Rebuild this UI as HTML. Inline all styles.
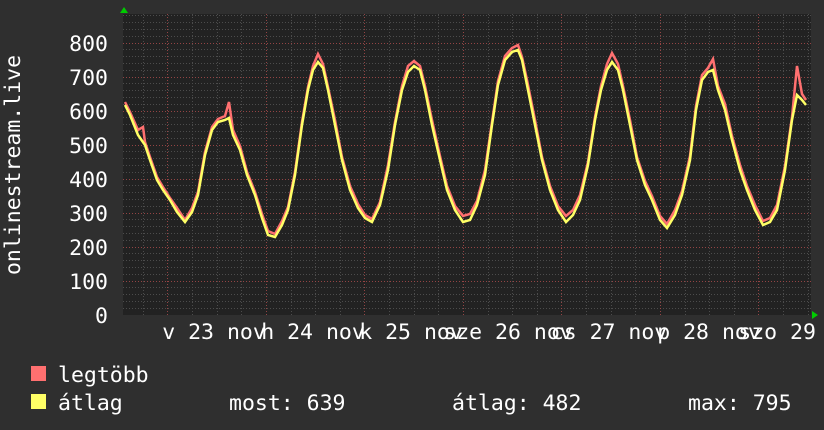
<!DOCTYPE html>
<html><head><meta charset="utf-8"><style>
html,body{margin:0;padding:0;background:#2f2f2f;}
svg{display:block}
text{font-family:"DejaVu Sans Mono","Liberation Mono",monospace;font-size:21.5px;fill:#fff}
</style></head><body>
<svg width="824" height="430" viewBox="0 0 824 430" xmlns="http://www.w3.org/2000/svg">
<rect width="824" height="430" fill="#2f2f2f"/>
<rect x="123" y="14" width="688" height="301" fill="#222"/>
<g stroke="#777" stroke-width="1" stroke-dasharray="1,2" opacity="0.5">
<path d="M123 308.5H811M123 301.5H811M123 294.5H811M123 287.5H811M123 274.5H811M123 267.5H811M123 260.5H811M123 253.5H811M123 240.5H811M123 233.5H811M123 226.5H811M123 219.5H811M123 206.5H811M123 199.5H811M123 192.5H811M123 185.5H811M123 172.5H811M123 165.5H811M123 158.5H811M123 151.5H811M123 138.5H811M123 131.5H811M123 124.5H811M123 117.5H811M123 104.5H811M123 97.5H811M123 90.5H811M123 83.5H811M123 70.5H811M123 63.5H811M123 56.5H811M123 49.5H811M123 36.5H811M123 29.5H811M123 22.5H811M123 15.5H811"/>
<path d="M143.5 14V315M192.5 14V315M217.5 14V315M241.5 14V315M291.5 14V315M315.5 14V315M340.5 14V315M389.5 14V315M414.5 14V315M438.5 14V315M488.5 14V315M512.5 14V315M537.5 14V315M586.5 14V315M611.5 14V315M635.5 14V315M685.5 14V315M709.5 14V315M734.5 14V315M783.5 14V315M808.5 14V315"/>
</g>
<g stroke="#a04848" stroke-width="1" stroke-dasharray="1,2" opacity="0.9">
<path d="M123 281.5H811M123 247.5H811M123 213.5H811M123 179.5H811M123 145.5H811M123 111.5H811M123 77.5H811M123 43.5H811"/>
<path d="M167.5 14V315M266.5 14V315M364.5 14V315M463.5 14V315M561.5 14V315M660.5 14V315M758.5 14V315"/>
</g>
<polygon points="120,13 128,13 124,7" fill="#0c0"/>
<polygon points="812,311 812,319 818,315" fill="#0c0"/>
<polyline transform="translate(0,2)" fill="none" stroke="#ff7070" stroke-width="2.5" points="125,100 130,110 138,128 143,125 145,140 150,155 157,175 163,185 170,196 177,206 185,218 192,206 198,190 205,150 212,125 218,117 225,114 229,100 233,128 240,144 247,170 255,190 262,212 268,229 275,232 282,219 288,205 295,170 302,120 308,85 313,64 318,52 323,62 328,85 335,118 342,155 350,184 358,202 365,213 372,217 380,200 388,163 395,120 402,84 408,64 414,59 420,64 425,84 432,118 440,154 447,184 455,204 463,214 470,212 477,199 485,168 492,120 498,79 505,54 512,46 518,43 522,55 527,78 535,118 542,155 550,184 558,204 566,214 573,208 580,193 588,160 595,115 601,84 607,62 612,51 618,62 623,84 630,118 637,155 645,179 652,194 660,214 667,222 675,208 682,189 690,154 696,104 702,73 708,66 713,57 718,84 725,102 732,134 740,163 747,184 755,203 763,219 770,216 777,203 785,164 792,115 797,64 802,92 806,98"/>
<polyline fill="none" stroke="#ffff66" stroke-width="2.5" points="125,105 130,115 138,135 145,145 150,160 157,180 163,190 170,200 177,212 185,222 192,212 198,195 205,155 212,130 218,122 225,120 229,118 233,135 240,150 247,175 255,195 262,218 268,235 275,237 282,225 288,210 295,175 302,125 308,90 313,70 318,62 323,68 328,90 335,125 342,160 350,190 358,208 365,218 372,222 380,205 388,170 395,125 402,90 408,72 414,66 420,70 425,90 432,125 440,160 447,190 455,210 463,222 470,220 477,205 485,175 492,125 498,85 505,60 512,52 518,50 522,60 527,85 535,125 542,160 550,190 558,210 566,222 573,215 580,200 588,165 595,120 601,90 607,70 612,62 618,70 623,90 630,125 637,160 645,185 652,200 660,220 667,228 675,215 682,195 690,160 696,110 702,80 708,72 713,70 718,90 725,110 732,140 740,170 747,190 755,210 763,225 770,222 777,210 785,170 792,120 797,95 802,100 806,105"/>
<g text-anchor="end">
<text x="108" y="323">0</text><text x="108" y="289">100</text><text x="108" y="255">200</text><text x="108" y="221">300</text><text x="108" y="187">400</text><text x="108" y="153">500</text><text x="108" y="119">600</text><text x="108" y="85">700</text><text x="108" y="51">800</text>
</g>
<g text-anchor="middle">
<text x="214" y="339">v 23 nov</text><text x="313" y="339">h 24 nov</text><text x="411" y="339">k 25 nov</text><text x="508" y="339">sze 26 nov</text><text x="609" y="339">cs 27 nov</text><text x="709" y="339">p 28 nov</text><text x="803" y="339">szo 29 nov</text>
</g>
<text transform="translate(20,165) rotate(-90)" text-anchor="middle">onlinestream.live</text>
<rect x="31" y="366" width="15" height="15" fill="#ff7070"/>
<rect x="31" y="394" width="15" height="15" fill="#ffff66"/>
<text x="58" y="382">legtöbb</text>
<text x="58" y="410">átlag</text>
<text x="229" y="410">most: 639</text>
<text x="452" y="410">átlag: 482</text>
<text x="688" y="410">max: 795</text>
</svg>
</body></html>
